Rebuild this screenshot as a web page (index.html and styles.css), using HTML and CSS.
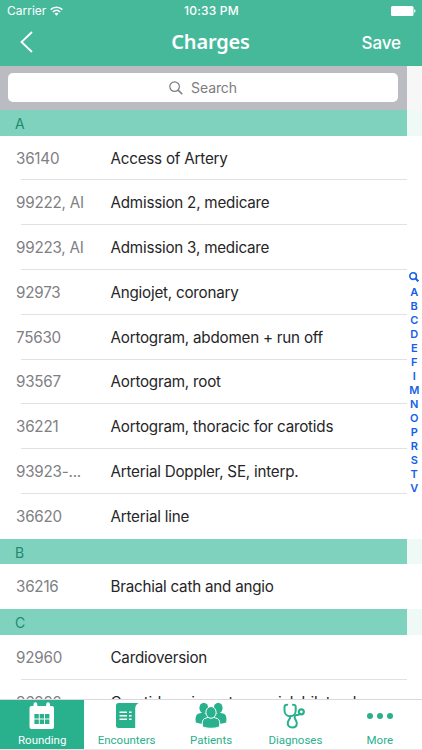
FILE: index.html
```html
<!DOCTYPE html>
<html lang="en">
<head>
    <meta charset="UTF-8">
    <meta name="viewport" content="width=device-width, initial-scale=1.0">
    <title>Charges</title>
    <link rel="stylesheet" href="styles.css">
</head>
<body>
    <div class="app">
        <header class="header">
            <div class="status-bar">
                <div class="carrier">
                    <span>Carrier</span>
                    <svg class="wifi" viewBox="0 0 12 9" width="13" height="10" fill="none" stroke="#fff" stroke-width="1.4">
                        <path d="M0.6 3.2C3.6 0.2 8.4 0.2 11.4 3.2"/>
                        <path d="M2.6 5.4C4.6 3.5 7.4 3.5 9.4 5.4"/>
                        <path d="M6 8.8L4.1 6.9C5.2 6 6.8 6 7.9 6.9Z" fill="#fff" stroke="none"/>
                    </svg>
                </div>
                <span class="time">10:33 PM</span>
                <svg class="battery" viewBox="0 0 25 10" width="25" height="10" fill="#fff">
                    <rect x="0" y="0" width="22.5" height="10" rx="1.5"/>
                    <path d="M23.2 3.3C24.9 3.6 24.9 6.4 23.2 6.7Z"/>
                </svg>
            </div>
            <div class="nav-bar">
                <svg class="back" viewBox="0 0 13 22" width="13" height="22" fill="none" stroke="#fff" stroke-width="1.8">
                    <path d="M12 1L1.5 11L12 21"/>
                </svg>
                <h1 class="title">Charges</h1>
                <span class="save">Save</span>
            </div>
        </header>

        <main class="content">
            <div class="search-bar">
                <div class="search-field">
                    <svg viewBox="0 0 14 14" width="14" height="14" fill="none" stroke="#7c7c82" stroke-width="1.2">
                        <circle cx="5.6" cy="5.6" r="4.8"/>
                        <path d="M9.1 9.1L13.3 13.3" stroke-width="1.5"/>
                    </svg>
                    <span>Search</span>
                </div>
            </div>

            <h2 class="section">A</h2>
            <ul class="rows">
                <li class="row"><span class="code">36140</span><span class="name">Access of Artery</span></li>
                <li class="row"><span class="code">99222, AI</span><span class="name">Admission 2, medicare</span></li>
                <li class="row"><span class="code">99223, AI</span><span class="name">Admission 3, medicare</span></li>
                <li class="row"><span class="code">92973</span><span class="name">Angiojet, coronary</span></li>
                <li class="row"><span class="code">75630</span><span class="name">Aortogram, abdomen + run off</span></li>
                <li class="row"><span class="code">93567</span><span class="name">Aortogram, root</span></li>
                <li class="row"><span class="code">36221</span><span class="name">Aortogram, thoracic for carotids</span></li>
                <li class="row"><span class="code">93923-...</span><span class="name">Arterial Doppler, SE, interp.</span></li>
                <li class="row"><span class="code">36620</span><span class="name">Arterial line</span></li>
            </ul>
            <h2 class="section">B</h2>
            <ul class="rows">
                <li class="row"><span class="code">36216</span><span class="name">Brachial cath and angio</span></li>
            </ul>
            <h2 class="section">C</h2>
            <ul class="rows">
                <li class="row"><span class="code">92960</span><span class="name">Cardioversion</span></li>
                <li class="row"><span class="code">36222</span><span class="name">Carotid angio, extracranial, bilateral</span></li>
            </ul>

            <!-- alphabet index floating over the list -->
            <nav class="index">
                <svg viewBox="0 0 10 10" width="10" height="10" fill="none" stroke="#1460e8" stroke-width="1.6">
                    <circle cx="4.1" cy="4.1" r="3.3"/>
                    <path d="M6.5 6.5L9.4 9.4" stroke-width="2"/>
                </svg>
                <span>A</span>
                <span>B</span>
                <span>C</span>
                <span>D</span>
                <span>E</span>
                <span>F</span>
                <span>I</span>
                <span>M</span>
                <span>N</span>
                <span>O</span>
                <span>P</span>
                <span>R</span>
                <span>S</span>
                <span>T</span>
                <span>V</span>
            </nav>
        </main>

        <footer class="tab-bar">
            <div class="tab active">
                <svg viewBox="0 0 26 28" width="26" height="28">
                    <path fill="#fff" d="M2.5 4H4.5V2.2a1.9 1.9 0 0 1 3.8 0V4H17.2V2.2a1.9 1.9 0 0 1 3.8 0V4H23a2 2 0 0 1 2 2V25a2 2 0 0 1-2 2H2.5a2 2 0 0 1-2-2V6a2 2 0 0 1 2-2Z"/>
                    <path fill="#29b08c" d="M5.4 12h4.4v4.4h-4.4ZM10.7 12h4.4v4.4h-4.4ZM16 12h4.4v4.4h-4.4ZM5.4 17.6h4.4v4.4h-4.4ZM10.7 17.6h4.4v4.4h-4.4ZM16 17.6h4.4v4.4h-4.4Z"/>
                </svg>
                <span>Rounding</span>
            </div>
            <div class="tab">
                <svg viewBox="0 0 26 28" width="26" height="28">
                    <path fill="#29b08c" d="M4.5 1H24.5C22 2.4 21.2 4.4 21.2 7V26H4.5a2.5 2.5 0 0 1-2.5-2.5V3.5A2.5 2.5 0 0 1 4.5 1Z"/>
                    <path stroke="#fff" stroke-width="1.5" d="M5.5 10.3H13M5.5 13.8H13M5.5 17.3H13M15 10.3H17.6M15 13.8H17.6M15 17.3H17.6"/>
                </svg>
                <span>Encounters</span>
            </div>
            <div class="tab">
                <svg viewBox="0 0 32 28" width="32" height="28" fill="#29b08c">
                    <path d="M.8 20.4C.2 16.5.6 13.2 2.6 12C4.4 10.9 6 11.4 7.5 10.8L13 12V21.5C8.5 22 4.5 21.8.8 20.4Z"/>
                    <path d="M31.2 20.4C31.8 16.5 31.4 13.2 29.4 12C27.6 10.9 26 11.4 24.5 10.8L19 12V21.5C23.5 22 27.5 21.8 31.2 20.4Z"/>
                    <ellipse cx="8.8" cy="6" rx="4.4" ry="5.2"/>
                    <ellipse cx="23.2" cy="6" rx="4.4" ry="5.2"/>
                    <g stroke="#fff" stroke-width="1">
                        <path d="M7.4 24.7C7 20.8 7.2 17.8 9.4 16.6C11 15.8 12.5 15.9 13.5 15.2H18.5C19.5 15.9 21 15.8 22.6 16.6C24.8 17.8 25 20.8 24.6 24.7C19.5 26.8 12.5 26.8 7.4 24.7Z"/>
                        <ellipse cx="16" cy="10.4" rx="5.1" ry="5.9"/>
                    </g>
                </svg>
                <span>Patients</span>
            </div>
            <div class="tab">
                <svg viewBox="0 0 26 28" width="26" height="28" fill="none" stroke="#29b08c" stroke-width="2" stroke-linecap="round">
                    <path d="M5.2 2.7C3.3 2.7 2.5 3.3 2.5 5V8.5C2.5 11.8 5 14.3 8.2 14.3C11.4 14.3 13.7 11.8 13.7 8.5V5C13.7 3.3 12.9 2.7 11 2.7"/>
                    <path d="M8.2 14.3C8.6 16.6 6.2 18.2 5.8 20.5C5.3 23.4 7.4 25.5 10.2 25.5C13 25.5 14.8 23.7 14.8 21.2C14.8 18.4 12.5 17.4 12.6 15C12.7 12.3 15.4 13.8 17.4 12.2"/>
                    <circle cx="19.3" cy="9.8" r="2.5" stroke-width="2.2"/>
                </svg>
                <span>Diagnoses</span>
            </div>
            <div class="tab">
                <svg viewBox="0 0 28 28" width="28" height="28" fill="#29b08c">
                    <circle cx="4" cy="14" r="3"/>
                    <circle cx="14" cy="14" r="3"/>
                    <circle cx="24" cy="14" r="3"/>
                </svg>
                <span>More</span>
            </div>
        </footer>
    </div>
</body>
</html>
```
FILE: styles.css
```css
* {
    box-sizing: border-box;
}
body {
    margin: 0;
    font-family: Inter, "Liberation Sans", sans-serif;
    background-color: #fff;
    color: #262628;
}
.app {
    display: flex;
    flex-direction: column;
    width: 422px;
    height: 750px;
    overflow: hidden;
}

/* Green header with status bar and navigation */
.header {
    flex: none;
    height: 65.5px;
    background-color: #46b99b;
    color: #fff;
}
.status-bar {
    display: grid;
    grid-template-columns: 1fr auto 1fr;
    align-items: center;
    height: 21px;
    padding: 0 6px 0 7px;
    font-size: 12px;
}
.carrier {
    display: flex;
    align-items: center;
    gap: 4px;
}
.time {
    font-weight: 500;
    letter-spacing: 0.2px;
}
.battery {
    justify-self: end;
}
.nav-bar {
    display: grid;
    grid-template-columns: 1fr auto 1fr;
    align-items: center;
    height: 42px;
    padding: 0 21px 0 20px;
}
.title {
    margin: 0;
    font-family: "Noto Sans", sans-serif;
    font-size: 20px;
    font-weight: 600;
    line-height: 24px;
    letter-spacing: -0.2px;
}
.save {
    justify-self: end;
    padding-top: 2px;
    font-size: 17px;
    font-weight: 500;
    letter-spacing: -0.1px;
}

/* Scrolling list */
.content {
    position: relative;
    flex: 1;
    min-height: 0;
    overflow: hidden;
}
.search-bar {
    height: 44.3px;
    padding: 7.5px 24px 7.5px 8px;
    background-color: #bbbbc2;
}
.search-field {
    display: flex;
    align-items: center;
    justify-content: center;
    gap: 8px;
    height: 29px;
    border-radius: 5px;
    background-color: #fff;
    color: #7c7c82;
    font-size: 14px;
    letter-spacing: -0.1px;
}
.section {
    height: 25.9px;
    margin: 0;
    padding-left: 15px;
    background-color: #7fd3be;
    color: #23896f;
    font-size: 14px;
    font-weight: 400;
    line-height: 27px;
}
.rows {
    margin: 0;
    padding: 0;
    list-style: none;
}
.row {
    display: flex;
    align-items: center;
    height: 44.78px;
    padding-left: 16px;
    font-size: 15.2px;
    letter-spacing: -0.22px;
    white-space: nowrap;
    /* inset separator line */
    background: linear-gradient(#e2e2e4, #e2e2e4) 21px 100% / 386px 1px no-repeat;
}
.row:last-child {
    background: none;
}
.code {
    width: 94.5px;
    color: #808084;
}
.index {
    position: absolute;
    top: 0;
    right: 0;
    bottom: 0;
    display: flex;
    flex-direction: column;
    align-items: center;
    width: 15.5px;
    padding-top: 206px;
    background-color: rgba(255, 255, 255, 0.88);
    color: #1460e8;
    font-size: 11px;
    font-weight: 600;
    line-height: 14px;
}
.index svg {
    flex: none;
    margin-bottom: 3.5px;
}

/* Bottom tabs */
.tab-bar {
    flex: none;
    display: flex;
    height: 51px;
    border-top: 1px solid #d9d9dc;
    border-bottom: 1px solid #e6e6e8;
    background-color: #fff;
}
.tab {
    flex: 1;
    display: flex;
    flex-direction: column;
    align-items: center;
    padding-top: 2px;
    color: #29b08c;
    font-family: Roboto, sans-serif;
    font-size: 11.5px;
    line-height: 20px;
}
.tab svg {
    flex: none;
}
.tab.active {
    background-color: #29b08c;
    color: #fff;
}
```
